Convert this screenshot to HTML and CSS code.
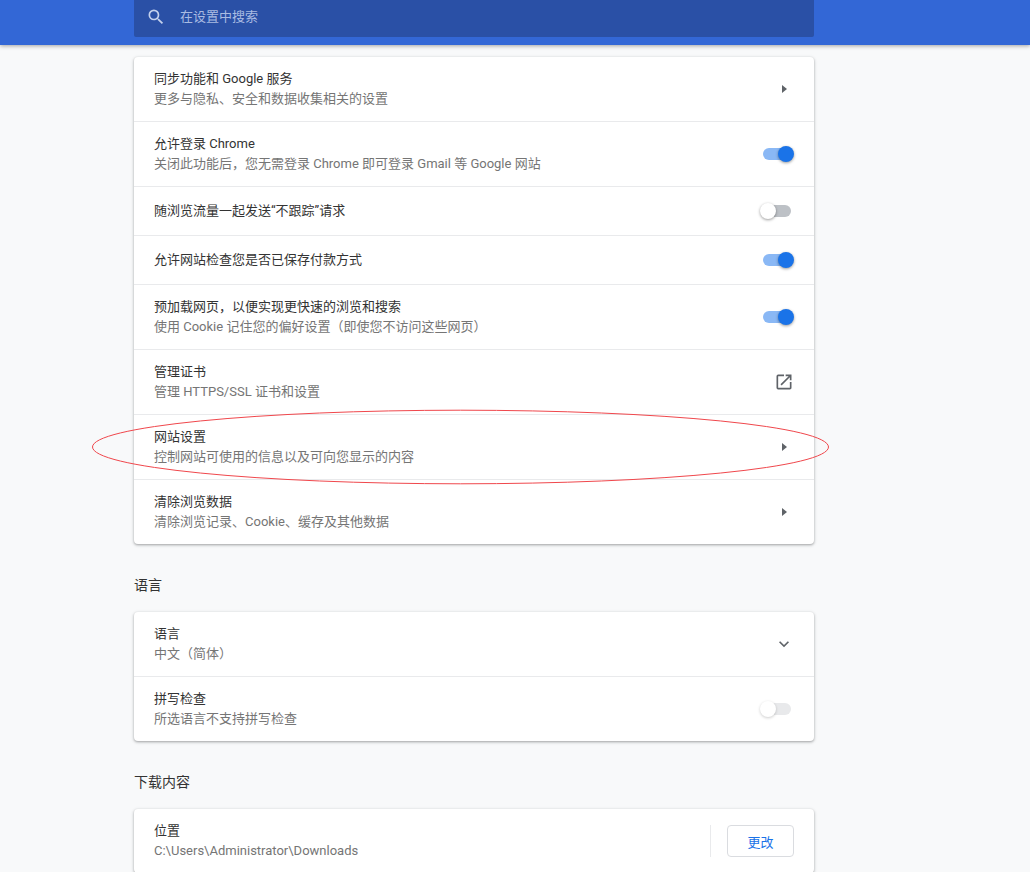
FILE: index.html
```html
<!DOCTYPE html>
<html lang="zh-CN">
<head>
<meta charset="utf-8">
<title>设置</title>
<link rel="stylesheet" href="styles.css">
</head>
<body>
<header class="top">
  <div class="search">
    <svg class="search-icon" viewBox="0 0 24 24" width="20" height="20"><path fill="currentColor" d="M15.5 14h-.79l-.28-.27A6.47 6.47 0 0 0 16 9.5 6.5 6.5 0 1 0 9.5 16c1.61 0 3.09-.59 4.23-1.57l.27.28v.79l5 4.99L20.49 19l-4.99-5zm-6 0C7.01 14 5 11.99 5 9.5S7.01 5 9.5 5 14 7.01 14 9.5 11.99 14 9.5 14z"/></svg>
    <span class="search-text">在设置中搜索</span>
  </div>
</header>
<main class="page">
  <section class="card">
    <div class="row tall"><div class="txt"><div class="t">同步功能和 Google 服务</div><div class="s">更多与隐私、安全和数据收集相关的设置</div></div><span class="arrow"></span></div>
    <div class="row tall"><div class="txt"><div class="t">允许登录 Chrome</div><div class="s">关闭此功能后，您无需登录 Chrome 即可登录 Gmail 等 Google 网站</div></div><span class="toggle on"></span></div>
    <div class="row"><div class="txt"><div class="t">随浏览流量一起发送“不跟踪”请求</div></div><span class="toggle"></span></div>
    <div class="row"><div class="txt"><div class="t">允许网站检查您是否已保存付款方式</div></div><span class="toggle on"></span></div>
    <div class="row tall"><div class="txt"><div class="t">预加载网页，以便实现更快速的浏览和搜索</div><div class="s">使用 Cookie 记住您的偏好设置（即使您不访问这些网页）</div></div><span class="toggle on"></span></div>
    <div class="row tall"><div class="txt"><div class="t">管理证书</div><div class="s">管理 HTTPS/SSL 证书和设置</div></div>
      <svg class="ext" viewBox="0 0 24 24" width="20" height="20"><path fill="currentColor" d="M19 19H5V5h7V3H5a2 2 0 0 0-2 2v14a2 2 0 0 0 2 2h14c1.1 0 2-.9 2-2v-7h-2v7zM14 3v2h3.59l-9.83 9.83 1.41 1.41L19 6.41V10h2V3h-7z"/></svg></div>
    <div class="row tall"><div class="txt"><div class="t">网站设置</div><div class="s">控制网站可使用的信息以及可向您显示的内容</div></div><span class="arrow"></span></div>
    <div class="row tall"><div class="txt"><div class="t">清除浏览数据</div><div class="s">清除浏览记录、Cookie、缓存及其他数据</div></div><span class="arrow"></span></div>
  </section>
  <h2 class="head">语言</h2>
  <section class="card">
    <div class="row tall"><div class="txt"><div class="t">语言</div><div class="s">中文（简体）</div></div>
      <svg class="chev" viewBox="0 0 24 24" width="20" height="20"><path fill="currentColor" d="M16.59 8.59 12 13.17 7.41 8.59 6 10l6 6 6-6z"/></svg></div>
    <div class="row tall"><div class="txt"><div class="t">拼写检查</div><div class="s">所选语言不支持拼写检查</div></div><span class="toggle dim"></span></div>
  </section>
  <h2 class="head">下载内容</h2>
  <section class="card">
    <div class="row tall"><div class="txt"><div class="t">位置</div><div class="s">C:\Users\Administrator\Downloads</div></div>
      <div class="sep"></div><button class="btn">更改</button></div>
  </section>
</main>
<svg class="mark" viewBox="0 0 738 75" width="738" height="75"><ellipse cx="368.5" cy="37" rx="368" ry="36.8"/></svg>
</body>
</html>
```
FILE: styles.css
```css
* { box-sizing: border-box; }
html, body { margin: 0; height: 872px; overflow: hidden; }
body {
  position: relative;
  background: #f8f9fa;
  font-family: Roboto, "Noto Sans CJK SC", sans-serif;
  font-size: 13px;
  color: #333;
}
.top {
  height: 45px;
  background: #3367d6;
  box-shadow: 0 1px 4px rgba(0, 0, 0, .35);
  padding-left: 134px;
}
.search {
  width: 680px;
  height: 37px;
  background: #2a50a6;
  border-radius: 0 0 2px 2px;
  display: flex;
  align-items: center;
  padding: 0 0 4px 12px;
  color: #a9bbe2;
  gap: 14px;
  font-size: 13px;
}
.search-icon { color: #c3d0ec; }
.search-text { margin-top: -2px; }
.page {
  width: 680px;
  margin-left: 134px;
  padding-top: 12px;
}
.card {
  background: #fff;
  border-radius: 4px;
  box-shadow: 0 1px 2px rgba(60, 64, 67, .3), 0 1px 3px 1px rgba(60, 64, 67, .15);
}
.row {
  height: 49px;
  padding: 0 20px;
  display: flex;
  align-items: center;
  border-top: 1px solid #e9eaec;
}
.row:first-child { border-top: 0; height: 64px; }
.row.tall:not(:first-child) { height: 65px; }
.txt { flex: 1; min-width: 0; line-height: 20px; }
.t { color: #333; }
.s { color: #757575; }
.arrow {
  width: 0;
  height: 0;
  margin-right: 7px;
  border-left: 5px solid #5f6368;
  border-top: 4.5px solid transparent;
  border-bottom: 4.5px solid transparent;
}
.toggle {
  position: relative;
  width: 28px;
  height: 12px;
  margin-right: 3px;
  border-radius: 6px;
  background: #bdc1c6;
}
.toggle::after {
  content: "";
  position: absolute;
  left: -3px;
  top: -2px;
  width: 16px;
  height: 16px;
  border-radius: 50%;
  background: #fff;
  box-shadow: 0 1px 3px rgba(0, 0, 0, .4);
}
.toggle.on { background: #8ab8f5; }
.toggle.on::after { left: 15px; background: #1a73e8; }
.toggle.dim { background: #e8e9eb; }
.toggle.dim::after { box-shadow: 0 1px 3px rgba(0, 0, 0, .2); }
.ext, .chev { color: #5f6368; }
.head {
  margin: 0;
  height: 68px;
  padding-top: 31px;
  line-height: 20px;
  font-size: 14px;
  font-weight: 400;
  color: #333;
}
.sep { width: 1px; height: 32px; background: #e9eaec; margin-right: 16px; }
.btn {
  width: 67px;
  height: 32px;
  padding: 0;
  background: #fff;
  border: 1px solid #dadce0;
  border-radius: 4px;
  color: #1a73e8;
  font: inherit;
}
.mark {
  position: absolute;
  left: 92px;
  top: 410px;
  overflow: visible;
  pointer-events: none;
}
.mark ellipse { fill: none; stroke: #f0474c; stroke-width: 1; }
```
